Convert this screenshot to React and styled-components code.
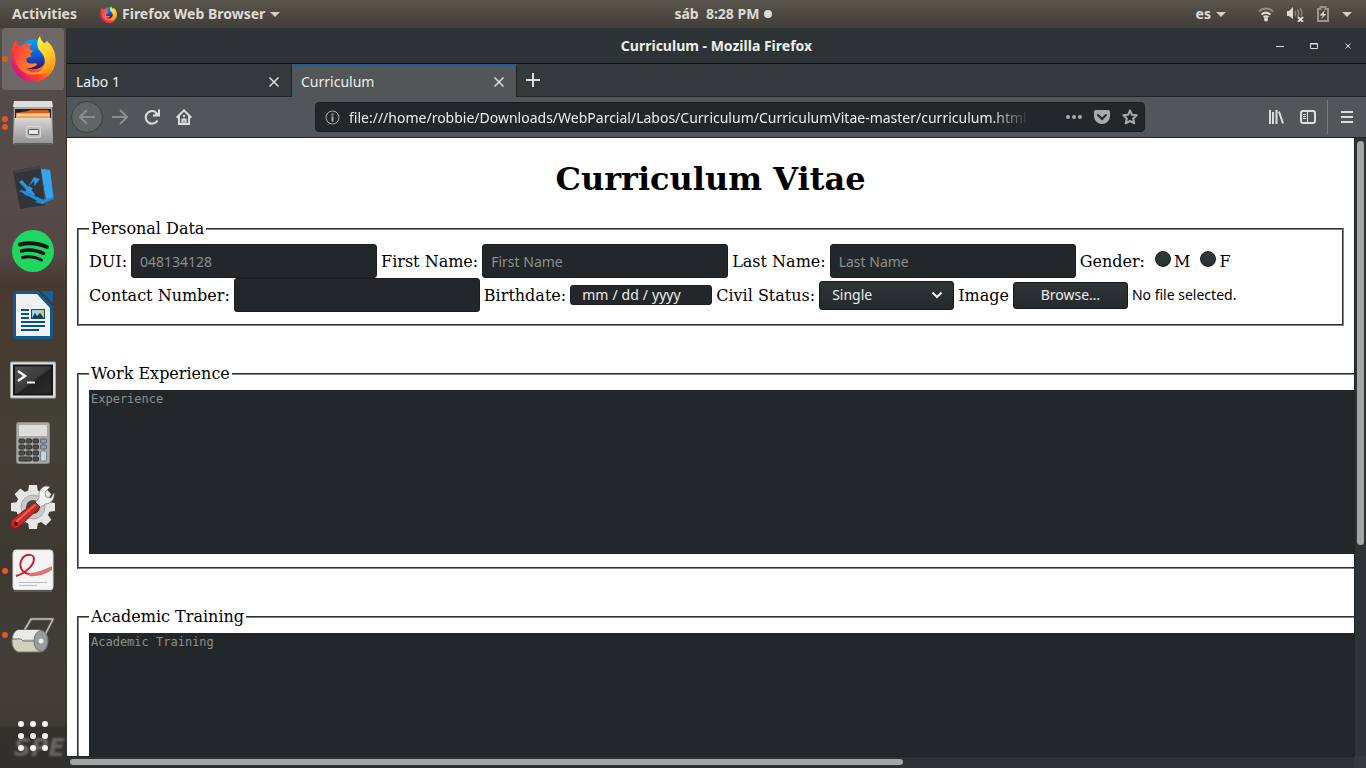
import React from "react";
import styled, { createGlobalStyle } from "styled-components";

const ui = '"Noto Sans", "Open Sans", sans-serif';
const serif = '"DejaVu Serif", "Liberation Serif", serif';
const mono = '"DejaVu Sans Mono", "Liberation Mono", monospace';

const GlobalStyle = createGlobalStyle`
  * { box-sizing: border-box; }
  body { margin: 0; overflow: hidden; background: #3e3b34; }
  button, input, select, textarea { margin: 0; font: inherit; color: inherit; }
  svg { display: block; flex: none; }
`;

const Desktop = styled.div`
  display: flex;
  flex-direction: column;
  height: 100vh;
  font-family: ${ui};
  font-size: 14px;
`;

/* ---------- top panel ---------- */
const TopBar = styled.header`
  display: grid;
  grid-template-columns: 8fr auto 7fr;
  align-items: center;
  flex: none;
  height: 28px;
  padding: 0 14px 0 12px;
  background: linear-gradient(#5a564d, #403e38);
  color: #dfdbd2;
  font-weight: 700;
`;
const PanelGroup = styled.div`
  display: flex;
  align-items: center;
  justify-content: ${(p) => (p.$end ? "flex-end" : "flex-start")};
  gap: ${(p) => p.$gap}px;
`;
const PanelButton = styled.button`
  display: flex;
  align-items: center;
  gap: 5px;
  padding: 0;
  border: 0;
  background: none;
  font-weight: 700;
  line-height: 20px;
  white-space: pre;
`;
const LanguageButton = styled(PanelButton)`
  margin-right: 20px;
`;
const Caret = styled.span`
  border: 5px solid transparent;
  border-top-color: #d3cfc7;
  border-bottom-width: 0;
`;
const Notice = styled.span`
  width: 8px;
  height: 8px;
  border-radius: 50%;
  background: #dcdcd8;
`;

/* ---------- dock ---------- */
const Main = styled.div`
  display: flex;
  flex: 1;
  min-height: 0;
`;
const Dock = styled.nav`
  position: relative;
  display: flex;
  flex-direction: column;
  gap: 2px;
  flex: none;
  width: 67px;
  padding: 0 2px 1px 2px;
  border-right: 1px solid #34312c;
  background: linear-gradient(
    #524c4a 0, #554b49 170px, #544846 225px, #46392f 258px, #4a3b31 290px,
    #423c32 345px, #444137 410px, #3d3831 530px, #413f38 640px, #3e3c35 697px,
    #32312c 700px, #31302b 100%
  );
`;
const DockItem = styled.button`
  position: relative;
  display: flex;
  align-items: center;
  justify-content: center;
  height: 62px;
  padding: 0;
  border: 0;
  border-radius: 4px;
  background: ${(p) => (p.$active ? "#6e6967" : "transparent")};
  margin-top: ${(p) => (p.$last ? "auto" : "0")};
`;
const Dots = styled.span`
  position: absolute;
  left: 0;
  top: 0;
  bottom: 0;
  display: flex;
  flex-direction: column;
  justify-content: center;
  gap: 2px;
`;
const Dot = styled.span`
  width: 6px;
  height: 6px;
  border-radius: 50%;
  background: #e95420;
`;
const Wallpaper = styled.span`
  position: absolute;
  right: 1px;
  bottom: 6px;
  color: #686663;
  font: italic 700 24px/28px "DejaVu Sans", sans-serif;
  filter: blur(1px);
`;

/* ---------- browser window ---------- */
const Window = styled.section`
  display: flex;
  flex-direction: column;
  flex: 1;
  min-width: 0;
  color: #eeeeec;
`;
const TitleBar = styled.div`
  display: grid;
  grid-template-columns: 1fr auto 1fr;
  align-items: center;
  height: 36px;
  flex: none;
  border-bottom: 1px solid #0e1011;
  background: #2d3234;
  font-weight: 700;
`;
const WindowControls = styled.div`
  grid-column: 3;
  display: flex;
  justify-content: flex-end;
  gap: 26px;
  padding-right: 14px;
`;
const TitleText = styled.h2`
  grid-column: 2;
  margin: 0;
  font-size: 14px;
  line-height: 20px;
`;
const IconButton = styled.button`
  display: flex;
  align-items: center;
  justify-content: center;
  flex: none;
  width: 16px;
  height: 16px;
  padding: 0;
  border: 0;
  border-radius: 50%;
  background: none;
  color: ${(p) => (p.$dim ? "#8b8e8e" : "#dddedb")};
`;
const BackButton = styled(IconButton)`
  width: 32px;
  height: 32px;
  margin-right: -7px;
  border: 1px solid #3c4041;
  background: #606465;
`;
const TinyButton = styled(IconButton)`
  width: 8px;
  height: 8px;
`;
const TabStrip = styled.div`
  display: flex;
  flex: none;
  height: 33px;
  background: #343a3c;
  box-shadow: inset 0 -1px #1f2324;
`;
const Tab = styled.div`
  display: flex;
  align-items: center;
  justify-content: space-between;
  width: 225px;
  padding: 0 9px;
  border-right: 1px solid #1f2324;
  background: ${(p) => (p.$active ? "#515658" : "transparent")};
  border-top: 2px solid ${(p) => (p.$active ? "#215d9c" : "transparent")};
`;
const NewTab = styled(IconButton)`
  width: 32px;
  height: 32px;
`;
const Toolbar = styled.div`
  display: flex;
  align-items: center;
  flex: none;
  height: 41px;
  padding: 0 11px 0 4px;
  border-bottom: 1px solid #1f2324;
  background: #515658;
`;
const NavButtons = styled.div`
  display: flex;
  align-items: center;
  gap: 16px;
  width: 244px;
  flex: none;
`;
const UrlBox = styled.div`
  display: flex;
  align-items: center;
  gap: 12px;
  flex: 1;
  min-width: 0;
  height: 30px;
  padding: 0 6px 0 9px;
  border: 1px solid #1b1e1f;
  border-radius: 4px;
  background: #232729;
  color: #a9abab;
`;
const UrlInput = styled.input`
  flex: 1;
  min-width: 0;
  margin: 0 24px 0 -3px;
  padding: 0;
  border: 0;
  outline: 0;
  background: none;
  color: #eeeeec;
  mask-image: linear-gradient(to right, #000 calc(100% - 40px), transparent);
`;
const Tools = styled.div`
  display: flex;
  align-items: center;
  justify-content: flex-end;
  gap: 16px;
  width: 210px;
  flex: none;
`;
const Separator = styled.span`
  width: 1px;
  height: 34px;
  margin: 0 -5px 0 -5px;
  background: #76797a;
`;

/* ---------- viewport ---------- */
const Viewport = styled.div`
  display: grid;
  grid-template-columns: minmax(0, 1fr) 12px;
  grid-template-rows: minmax(0, 1fr) 12px;
  flex: 1;
  min-height: 0;
  background: #343a3c;
`;
const Page = styled.main`
  overflow: hidden;
  padding: 22px 10px;
  background: #fff;
  color: #000;
  font: 16px/19px ${serif};
`;
const Track = styled.div`
  padding: ${(p) => (p.$vertical ? "3px 2px" : "2px 3px")};
  border: 0 solid #1f2324;
  border-width: ${(p) => (p.$vertical ? "0 0 0 1px" : "1px 0 0 0")};
  background: #2d3234;
`;
const Thumb = styled.div`
  width: ${(p) => (p.$vertical ? "7px" : "65%")};
  height: ${(p) => (p.$vertical ? "66%" : "6px")};
  border-radius: 4px;
  background: #a4a6a6;
`;
const Heading = styled.h1`
  margin: 0 0 20px;
  font-size: 32px;
  line-height: 39px;
  text-align: center;
`;
const Group = styled.fieldset`
  width: ${(p) => (p.$wide ? "max-content" : "auto")};
  margin: 0 0 38px;
  padding: ${(p) => (p.$wide ? "7px 10px 13px" : "6px 10px 12px")};
  border: 2px groove #808686;
`;
const Legend = styled.legend`
  padding: 0 2px;
`;
const Row = styled.div`
  display: flex;
  align-items: center;
  gap: 4px;
  height: 34px;
  white-space: nowrap;
`;
const TextInput = styled.input`
  width: 246px;
  height: 34px;
  padding: 0 8px;
  border: 1px solid #1b1f20;
  border-radius: 3px;
  background: #232729;
  color: #eeeeec;
  font: 14px/20px ${ui};
  &::placeholder { color: #8c8f8f; opacity: 1; }
`;
const DateInput = styled(TextInput)`
  width: 142px;
  height: 20px;
  padding: 0 11px;
  &::-webkit-calendar-picker-indicator { display: none; }
  &::-webkit-datetime-edit-text { padding: 0 4px; }
  &::-webkit-datetime-edit-fields-wrapper,
  &::-webkit-datetime-edit { padding: 0; }
  &::-webkit-datetime-edit-month-field,
  &::-webkit-datetime-edit-day-field,
  &::-webkit-datetime-edit-year-field { padding: 0; color: #eeeeec; }
`;
const RadioLabel = styled.label`
  display: flex;
  align-items: center;
  gap: 3px;
  margin-left: 6px;
`;
const Radio = styled.input`
  appearance: none;
  width: 16px;
  height: 16px;
  margin-bottom: 4px;
  border: 1px solid #151819;
  border-radius: 50%;
  background: linear-gradient(#33393b, #2a2f31);
`;
const SelectWrap = styled.span`
  position: relative;
  display: flex;
`;
const Select = styled.select`
  appearance: none;
  width: 135px;
  height: 29px;
  padding: 0 12px;
  border: 1px solid #151819;
  border-radius: 3px;
  background: linear-gradient(#2f3537, #25292b);
  color: #eeeeec;
  font: 14px/20px ${ui};
`;
const Chevron = styled.svg`
  position: absolute;
  right: 11px;
  top: 10px;
  pointer-events: none;
`;
const BrowseButton = styled.button`
  width: 115px;
  height: 27px;
  padding: 0;
  border: 1px solid #151819;
  border-radius: 3px;
  background: linear-gradient(#2f3537, #25292b);
  color: #eeeeec;
  font: 14px/20px ${ui};
`;
const FileName = styled.span`
  font: 14px/20px ${ui};
`;
const TextArea = styled.textarea`
  display: block;
  height: 164px;
  padding: 2px;
  border: 0;
  resize: none;
  overflow: hidden;
  background: #232729;
  color: #eeeeec;
  font: 12px/14px ${mono};
  &::placeholder { color: #8c8f8f; opacity: 1; }
`;

/* ---------- icons ---------- */
const Firefox = ({ size, id }) => (
  <svg width={size} height={size} viewBox="0 0 44 45">
    <defs>
      <linearGradient id={id + "a"} x1="1" y1="0.1" x2="0.1" y2="0.8">
        <stop offset="0" stopColor="#fff14a" />
        <stop offset="0.35" stopColor="#ffa318" />
        <stop offset="0.65" stopColor="#ff4a24" />
        <stop offset="1" stopColor="#d3108c" />
      </linearGradient>
      <linearGradient id={id + "b"} x1="0.5" y1="0" x2="0.6" y2="1">
        <stop offset="0" stopColor="#00a3fb" />
        <stop offset="0.5" stopColor="#0961d8" />
        <stop offset="1" stopColor="#3a1078" />
      </linearGradient>
      <linearGradient id={id + "c"} x1="0.2" y1="0" x2="0.6" y2="1">
        <stop offset="0" stopColor="#fff44f" />
        <stop offset="0.5" stopColor="#ffd228" />
        <stop offset="1" stopColor="#ff8a16" />
      </linearGradient>
      <linearGradient id={id + "d"} x1="0" y1="0" x2="1" y2="0.6">
        <stop offset="0" stopColor="#ff2a48" />
        <stop offset="1" stopColor="#ff9a1a" />
      </linearGradient>
    </defs>
    <path d="M5.7 4.7C1 10 0 17 .3 23 1 36 11 45 22.500 45S44 35 44 23c0-7-3-13-8.300-18L30 10H12L7 10z" fill={`url(#${id}a)`} />
    <circle cx="22" cy="18" r="14.500" fill={`url(#${id}b)`} />
    <path d="M5.700 4.700C3 12 2 24 8 31s15 9 21 4c-6 2-12 0-14-4 4 1 8 0 11-3-1-2-4-1-6-1-3 0-5-2-4.500-5 1-1 3-1 5-2-.5-1.500-1.500-2-1-3l3-2.500c-3-.5-4.500-2-4-4l3-3c-5-1-9 0-11.500 2.500C7 9 6 7 5.700 4.700z" fill={`url(#${id}d)`} />
    <path d="M29 0c-3 3-3.500 9-1.500 13 3 4 6 6 6 12s-4 10-9 12c10 2 18-4 19-12C44 16 41 9 36 6c.5 2 .5 4 0 5C34 7 29 5 29 0z" fill={`url(#${id}c)`} />
  </svg>
);
const Files = () => (
  <svg width="44" height="46" viewBox="0 0 44 46">
    <defs>
      <linearGradient id="fl" x2="0" y2="1"><stop stopColor="#d7d7d7" /><stop offset="1" stopColor="#929292" /></linearGradient>
    </defs>
    <path d="M3 2h38l1 42H2z" fill="#a9a9a9" />
    <path d="M3 1h38l1 6H2z" fill="#dedede" />
    <path d="M4 9h36v10H4z" fill="#242424" />
    <path d="M5 13l12-2 2-1h18l2 3v5H5z" fill="#d85d1d" />
    <path d="M5 13h34v5H5z" fill="#f2a34e" />
    <path d="M6 15h32" stroke="#fff3df" strokeWidth="1" />
    <path d="M4 18h36l2 26H2z" fill="url(#fl)" />
    <path d="M3 43h38v2H3z" fill="#5d5b5a" />
    <rect x="15.500" y="26.500" width="14" height="11" rx="2" fill="#bcbcbc" stroke="#d9d9d9" />
    <rect x="17.500" y="29.500" width="10" height="5" rx="1" fill="#e9e9e9" stroke="#4b4b4b" />
  </svg>
);
const Code = () => (
  <svg width="42" height="46" viewBox="0 0 42 46">
    <path d="M1 7l27-5 5 39-25 4z" fill="#33343a" />
    <path d="M1 7l27-5 .5 3L4 9z" fill="#424349" />
    <path d="M29 5l9 1 4 29-12 5-8-2 12-3z" fill="#1787d3" />
    <path d="M29 5l9 1 3 27-7 2z" fill="#36a4ec" />
    <path d="M7 18l3-2 13 14-2 3zM22 13l6 2-13 17-3-2z" fill="#2796df" />
    <path d="M7 27l3-1 22 10 8-3-9 7z" fill="#1f8ed9" />
    <path d="M22 17l1 9-6-4z" fill="#33343a" />
  </svg>
);
const Spotify = () => (
  <svg width="44" height="44" viewBox="0 0 44 44" fill="none" stroke="#191414" strokeLinecap="round">
    <circle cx="22" cy="22" r="21" fill="#1ed760" stroke="none" />
    <path d="M9 15.500c9-2.500 18-1.500 27 2.500" strokeWidth="4" />
    <path d="M10.500 22c8-2 15-1 22 2.500" strokeWidth="3.500" />
    <path d="M11.500 28.500c7-1.500 13-.5 19 2.500" strokeWidth="3" />
  </svg>
);
const Writer = () => (
  <svg width="42" height="50" viewBox="0 0 42 50">
    <path d="M4 1h24l13 13v32q0 3-3 3H4q-3 0-3-3V4q0-3 3-3z" fill="#0c5b92" />
    <path d="M4 4h21l13 14v28H4z" fill="#f1f1f1" />
    <path d="M26 1h3l12 12v4z" fill="#463b32" />
    <path d="M29 1h12v12z" fill="#0a67a3" />
    <path d="M9 20h8M9 24h8M9 28h8M9 32h24M9 36h24M9 40h18" stroke="#075483" strokeWidth="2" />
    <rect x="19.500" y="19.500" width="13" height="9" fill="#9bd0f0" stroke="#075483" />
    <circle cx="30" cy="22" r="2" fill="#e8c33a" />
    <path d="M20 28l3-5 2 3 3-3 4 5z" fill="#333" />
  </svg>
);
const Terminal = () => (
  <svg width="46" height="40" viewBox="0 0 46 40">
    <defs><linearGradient id="tm" x2="1" y2="1"><stop stopColor="#555" /><stop offset="0.500" stopColor="#3b3b3b" /><stop offset="0.550" stopColor="#222" /><stop offset="1" stopColor="#2b2b2b" /></linearGradient></defs>
    <rect x="0.500" y="3" width="45" height="36" rx="1" fill="#ddd" stroke="#a9a9a9" />
    <rect x="4" y="6.500" width="38" height="29" fill="url(#tm)" stroke="#171717" strokeWidth="2" />
    <path d="M8 12l7 5-7 5" fill="none" stroke="#f5f5f5" strokeWidth="2.500" />
    <path d="M17 23.500h8" stroke="#f5f5f5" strokeWidth="2" />
  </svg>
);
const Calculator = () => (
  <svg width="34" height="42" viewBox="0 0 34 42">
    <rect x="0.500" y="0.500" width="33" height="41" rx="2" fill="#aaa9a6" stroke="#8a8986" />
    <rect x="3" y="3" width="28" height="11" rx="1" fill="#dddddb" />
    {[17, 23, 29].map((y) => [3, 10, 17].map((x) => <rect key={x + y * 50} x={x} y={y} width="5.500" height="4" rx="1" fill="#4c4f4e" stroke="#2e3130" />))}
    <rect x="3" y="35" width="12.500" height="4" rx="1" fill="#4c4f4e" stroke="#2e3130" />
    <rect x="17" y="35" width="5.500" height="4" rx="1" fill="#4c4f4e" stroke="#2e3130" />
    <rect x="24.500" y="17" width="6" height="4" rx="1" fill="#8ea0aa" stroke="#53616a" />
    <rect x="24.500" y="23" width="6" height="4" rx="1" fill="#8ea0aa" stroke="#53616a" />
    <rect x="24.500" y="29" width="6" height="10" rx="1" fill="#c5d3dc" stroke="#72808a" />
  </svg>
);
const Settings = () => (
  <svg width="46" height="46" viewBox="0 0 46 46">
    <g fill="#e6e6e4">
      <circle cx="23" cy="23" r="17" />
      {[0, 45, 90, 135, 180, 225, 270, 315].map((a) => <path key={a} d="M18 8l1-7h8l1 7z" transform={`rotate(${a} 23 23)`} />)}
    </g>
    <circle cx="23" cy="23" r="12" fill="#c9c9c7" stroke="#aaa" />
    <circle cx="23" cy="23" r="7" fill="#4a4740" />
    <path d="M25 19l4-5c-1-6 2-11 7-12l4 1-5 5 1 5 5 1 3-5c1 6-3 11-9 11l-5 4z" fill="#f2f2f2" stroke="#888" strokeWidth="0.800" />
    <path d="M25 18l5 5-20 19c-3 3-6 3-8 1s-2-5 1-8z" fill="#c32c2c" stroke="#8a1414" />
    <path d="M25 21L7 37" stroke="#ea6258" strokeWidth="2" strokeLinecap="round" />
    <circle cx="6" cy="40" r="2" fill="#521010" />
  </svg>
);
const Evince = () => (
  <svg width="42" height="44" viewBox="0 0 42 44" fill="none">
    <rect x="1" y="1" width="40" height="40" rx="3" fill="#f4f4f4" stroke="#d6d6d6" />
    <path d="M2 42h38" stroke="#5a5854" strokeWidth="2" />
    <path d="M4 27C14 24 22 16 22 10c0-5-8-6-12 0-4 7 0 15 8 15" stroke="#cf1c24" strokeWidth="2" />
    <path d="M17 24c8 0 14-3 23-7v4c-8 5-15 7-23 6z" fill="#e57171" />
    <path d="M7 33.500h28M7 36.500h18" stroke="#bbb" strokeWidth="1" />
  </svg>
);
const Roller = () => (
  <svg width="46" height="42" viewBox="0 0 46 42" fill="none">
    <path d="M14 17L21 5h22L32 27" stroke="#545652" strokeWidth="3" strokeLinejoin="round" />
    <path d="M14 17L21 5h22L32 27" stroke="#bfc2be" strokeWidth="1.500" strokeLinejoin="round" />
    <path d="M8 16h22c9 1 9 22 0 22H8c-8-3-8-19 0-22z" fill="#d0d1bd" stroke="#777970" />
    <path d="M8 16h22v9H15l-2 2-10-2c0-4 2-8 5-9z" fill="#e9e9e9" />
    <path d="M1 25h10l2 2h16" stroke="#64665d" />
    <ellipse cx="31" cy="27" rx="7" ry="10.500" fill="#999c9c" stroke="#717575" />
    <circle cx="31" cy="27" r="2.500" fill="#eee" />
  </svg>
);
const AppGrid = () => (
  <svg width="32" height="32" viewBox="0 0 32 32" fill="#f4f3f1">
    {[4, 16, 28].map((y) => [4, 16, 28].map((x) => <circle key={x * 40 + y} cx={x} cy={y} r="3" />))}
  </svg>
);

const Stroke = ({ d, size = 16, w = 2, fill = "none", ...rest }) => (
  <svg width={size} height={size} viewBox={`0 0 ${size} ${size}`} fill={fill} stroke="currentColor" strokeWidth={w} {...rest}>
    <path d={d} />
  </svg>
);

const Wifi = () => (
  <svg width="16" height="16" viewBox="0 0 16 16" fill="none" stroke="#dfdbd2" strokeWidth="2">
    <path d="M1 5.500c4-4 10-4 14 0" stroke="#8f8c85" />
    <path d="M3.500 8.500c3-2.500 6-2.500 9 0M5.500 11c2-1 3-1 5 0" />
    <circle cx="8" cy="13.500" r="2" fill="#dfdbd2" stroke="none" />
  </svg>
);
const Muted = () => (
  <svg width="18" height="16" viewBox="0 0 18 16" fill="none">
    <path d="M1 5h2l4-4v12L3 10H1z" fill="#dfdbd2" />
    <path d="M9 5q1.500 2.500 0 5M11.500 3.500q2.500 4 0 7M14 2q3 4 1 8" stroke="#88857e" strokeWidth="1.500" />
    <path d="M12 11l5 5M17 11l-5 5" stroke="#dfdbd2" strokeWidth="2" />
  </svg>
);
const Battery = () => (
  <svg width="14" height="16" viewBox="0 0 14 16">
    <path d="M2 3h2.500V1h5v2H12v12H2z" fill="none" stroke="#98958e" strokeWidth="2" />
    <path d="M9 4L3.500 9.500H7L5 13l5.500-5H7.500z" fill="#dfdbd2" />
  </svg>
);

const apps = [
  { name: "Firefox", icon: <Firefox size={46} id="dock" />, dots: 1, active: true },
  { name: "Files", icon: <Files />, dots: 2 },
  { name: "Visual Studio Code", icon: <Code />, dots: 0 },
  { name: "Spotify", icon: <Spotify />, dots: 0 },
  { name: "LibreOffice Writer", icon: <Writer />, dots: 0 },
  { name: "Terminal", icon: <Terminal />, dots: 0 },
  { name: "Calculator", icon: <Calculator />, dots: 0 },
  { name: "Settings", icon: <Settings />, dots: 0 },
  { name: "Document Viewer", icon: <Evince />, dots: 1 },
  { name: "Scanner", icon: <Roller />, dots: 1 },
];

const closeTab = "M3.500 3.500l9 9M12.500 3.500l-9 9";

export default function App() {
  const fileRef = React.useRef(null);
  return (
    <Desktop>
      <GlobalStyle />
      <TopBar>
        <PanelGroup $gap={23}>
          <PanelButton>Activities</PanelButton>
          <PanelButton><Firefox size={17} id="panel" />Firefox Web Browser<Caret /></PanelButton>
        </PanelGroup>
        <PanelButton>{"sáb  8:28 PM"}<Notice /></PanelButton>
        <PanelGroup $end $gap={12}>
          <LanguageButton>es<Caret /></LanguageButton>
          <Wifi />
          <Muted />
          <Battery />
          <Caret />
        </PanelGroup>
      </TopBar>

      <Main>
        <Dock aria-label="Applications">
          <Wallpaper aria-hidden="true">SPE</Wallpaper>
          {apps.map((app) => (
            <DockItem key={app.name} $active={app.active} aria-label={app.name}>
              <Dots>{Array.from({ length: app.dots }, (_, i) => <Dot key={i} />)}</Dots>
              {app.icon}
            </DockItem>
          ))}
          <DockItem $last aria-label="Show applications"><AppGrid /></DockItem>
        </Dock>

        <Window>
          <TitleBar>
            <TitleText>Curriculum - Mozilla Firefox</TitleText>
            <WindowControls>
              <TinyButton aria-label="Minimize"><Stroke size={8} d="M0 4.500h8" w={1} /></TinyButton>
              <TinyButton aria-label="Maximize"><Stroke size={8} d="M.5 1.500h7v5h-7zM0 2h8" w={1} /></TinyButton>
              <TinyButton aria-label="Close"><Stroke size={8} d="M1.500 1.500l5 5M6.500 1.500l-5 5" w={1} /></TinyButton>
            </WindowControls>
          </TitleBar>

          <TabStrip>
            <Tab>Labo 1<IconButton aria-label="Close tab"><Stroke d={closeTab} w={1.500} /></IconButton></Tab>
            <Tab $active>Curriculum<IconButton aria-label="Close tab"><Stroke d={closeTab} w={1.500} /></IconButton></Tab>
            <NewTab aria-label="New tab"><Stroke d="M8 1v14M1 8h14" /></NewTab>
          </TabStrip>

          <Toolbar>
            <NavButtons>
              <BackButton $dim aria-label="Back"><Stroke d="M16 8H1M8 1L1 8l7 7" /></BackButton>
              <IconButton $dim aria-label="Forward"><Stroke d="M0 8h15M8 1l7 7-7 7" /></IconButton>
              <IconButton aria-label="Reload">
                <Stroke d="M13.500 11.500A6.300 6.300 0 1 1 13 4.500M15 .5v6H9M14 5l-3-1" />
              </IconButton>
              <IconButton aria-label="Home">
                <svg width="16" height="16" viewBox="0 0 16 16" fill="none" stroke="currentColor" strokeWidth="2">
                  <path d="M.7 8.700L8 1.400l7.300 7.300M3 7.500V15h10V7.500" />
                  <path d="M6.500 15v-4.500h3V15M8 6v2" />
                </svg>
              </IconButton>
            </NavButtons>
            <UrlBox>
              <svg width="15" height="15" viewBox="0 0 15 15" fill="none" stroke="currentColor">
                <circle cx="7.500" cy="7.500" r="6.500" />
                <path d="M7.500 6.500v5M7.500 3.500v2" strokeWidth="2" />
              </svg>
              <UrlInput
                aria-label="Address"
                defaultValue="file:///home/robbie/Downloads/WebParcial/Labos/Curriculum/CurriculumVitae-master/curriculum.html"
              />
              <svg width="16" height="16" viewBox="0 0 16 16" fill="currentColor">
                <circle cx="2" cy="8" r="2" /><circle cx="8" cy="8" r="2" /><circle cx="14" cy="8" r="2" />
              </svg>
              <svg width="16" height="16" viewBox="0 0 16 16">
                <path d="M2 1h12q2 0 2 2v4.500a8 7.500 0 0 1-16 0V3q0-2 2-2z" fill="currentColor" />
                <path d="M4 6l4 4 4-4" fill="none" stroke="#232729" strokeWidth="2" strokeLinecap="round" />
              </svg>
              <Stroke d="M8 1.500l2 4.300 4.700.5-3.500 3.200 1 4.800L8 11.900l-4.200 2.400 1-4.800L1.300 6.300l4.700-.5z" strokeLinejoin="round" />
            </UrlBox>
            <Tools>
              <IconButton aria-label="Library"><Stroke d="M2 1v14M5 3v12M8.500 1v14M11 2.500l4 12" /></IconButton>
              <IconButton aria-label="Sidebars">
                <svg width="16" height="16" viewBox="0 0 16 16" fill="none" stroke="currentColor">
                  <rect x="1" y="2" width="14" height="12" rx="2" strokeWidth="2" />
                  <path d="M7.500 2v12M3 5.500h3M3 7.500h3M3 9.500h3" />
                </svg>
              </IconButton>
              <Separator />
              <IconButton aria-label="Menu"><Stroke d="M2 3h12M2 8h12M2 13h12" /></IconButton>
            </Tools>
          </Toolbar>

          <Viewport>
            <Page>
              <Heading>Curriculum Vitae</Heading>
              <Group>
                <Legend>Personal Data</Legend>
                <Row>
                  <label htmlFor="dui">DUI:</label>
                  <TextInput id="dui" placeholder="048134128" />
                  <label htmlFor="first">First Name:</label>
                  <TextInput id="first" placeholder="First Name" />
                  <label htmlFor="last">Last Name:</label>
                  <TextInput id="last" placeholder="Last Name" />
                  <span>Gender:</span>
                  <RadioLabel><Radio type="radio" name="gender" />M</RadioLabel>
                  <RadioLabel><Radio type="radio" name="gender" />F</RadioLabel>
                </Row>
                <Row>
                  <label htmlFor="phone">Contact Number:</label>
                  <TextInput id="phone" />
                  <label htmlFor="birth">Birthdate:</label>
                  <DateInput id="birth" type="date" />
                  <label htmlFor="civil">Civil Status:</label>
                  <SelectWrap>
                    <Select id="civil">
                      <option>Single</option>
                      <option>Married</option>
                    </Select>
                    <Chevron width="12" height="8" viewBox="0 0 12 8" fill="none" stroke="#eeeeec" strokeWidth="2">
                      <path d="M1.500 1.500L6 6l4.500-4.500" />
                    </Chevron>
                  </SelectWrap>
                  <label htmlFor="image">Image</label>
                  <BrowseButton type="button" onClick={() => fileRef.current.click()}>Browse…</BrowseButton>
                  <FileName>No file selected.</FileName>
                  <input id="image" type="file" hidden ref={fileRef} />
                </Row>
              </Group>
              <Group $wide>
                <Legend>Work Experience</Legend>
                <TextArea cols={260} placeholder="Experience" aria-label="Work Experience" />
              </Group>
              <Group $wide>
                <Legend>Academic Training</Legend>
                <TextArea cols={260} placeholder="Academic Training" aria-label="Academic Training" />
              </Group>
            </Page>
            <Track $vertical><Thumb $vertical /></Track>
            <Track><Thumb /></Track>
          </Viewport>
        </Window>
      </Main>
    </Desktop>
  );
}
